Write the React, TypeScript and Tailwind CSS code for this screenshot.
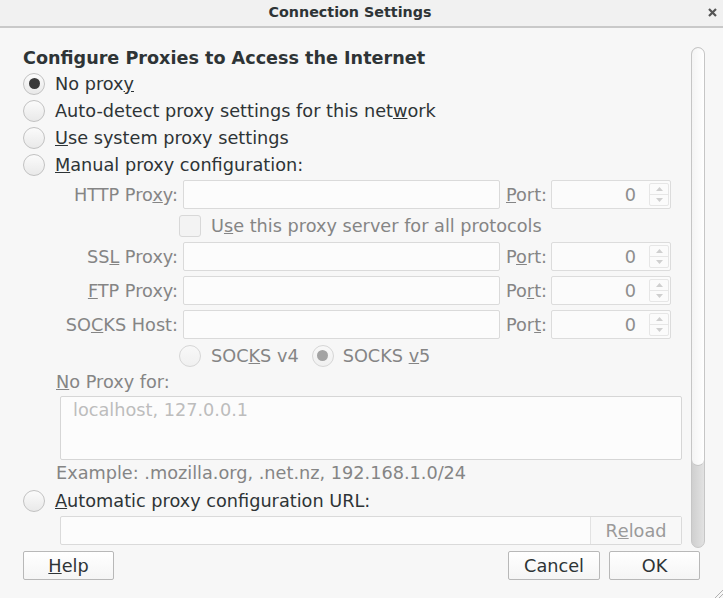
import React from 'react';

// Connection Settings dialog (GTK look)
const font = { fontFamily: '"DejaVu Sans", "Liberation Sans", sans-serif' };

function Radio({ checked, disabled }: { checked?: boolean; disabled?: boolean }) {
  return (
    <span
      className={`flex-none w-[22px] h-[22px] rounded-full border flex items-center justify-center ${
        disabled
          ? 'border-[#d6d6d6] bg-linear-to-b from-[#f8f8f8] to-[#f0f0f0]'
          : 'border-[#c2c2c2] bg-linear-to-b from-[#fbfbfb] to-[#e9e9e9]'
      }`}
    >
      {checked && (
        <span className={`w-[11px] h-[11px] rounded-full ${disabled ? 'bg-[#a3a3a3]' : 'bg-[#3a3a3a]'}`} />
      )}
    </span>
  );
}

function Input({ className = '' }: { className?: string }) {
  return <div className={`h-[29px] border border-[#dadada] bg-[#fcfcfc] rounded-[2px] ${className}`} />;
}

function Spin() {
  return (
    <div className="flex h-[29px] w-[120px] border border-[#dcdcdc] bg-[#fbfbfb] rounded-[2px]">
      <div className="flex-1 flex items-center justify-end pr-[13px] text-[#8e8e8e]">0</div>
      <div className="w-[20px] my-[2px] mr-[1px] flex flex-col border border-[#e6e6e6] rounded-[2px]">
        <div className="flex-1 flex items-center justify-center border-b border-[#e6e6e6]">
          <svg width="7" height="4" viewBox="0 0 7 4">
            <path d="M0 4 L3.5 0 L7 4 Z" fill="#cfcfcf" />
          </svg>
        </div>
        <div className="flex-1 flex items-center justify-center">
          <svg width="7" height="4" viewBox="0 0 7 4">
            <path d="M0 0 L3.5 4 L7 0 Z" fill="#cfcfcf" />
          </svg>
        </div>
      </div>
    </div>
  );
}

function ProxyRow({ label, port }: { label: React.ReactNode; port: React.ReactNode }) {
  return (
    <div className="flex items-center h-[29px]">
      <div className="w-[155px] text-right text-[#858585]">{label}</div>
      <Input className="ml-[5px] w-[317px]" />
      <div className="w-[51px] pl-[6px] text-[#858585]">{port}</div>
      <Spin />
    </div>
  );
}

function RadioRow({ checked, children }: { checked?: boolean; children: React.ReactNode }) {
  return (
    <div className="flex items-center h-[27px]">
      <Radio checked={checked} />
      <span className="ml-[10px] text-[#2e3436]">{children}</span>
    </div>
  );
}

function Button({ children, className = '' }: { children: React.ReactNode; className?: string }) {
  return (
    <div
      className={`h-[29px] border border-[#b8b8b8] rounded-[2px] bg-linear-to-b from-[#ffffff] to-[#f5f5f5] flex items-center justify-center text-[#2e3436] ${className}`}
    >
      {children}
    </div>
  );
}

export default function App() {
  return (
    <div className="relative w-[723px] h-[598px] bg-[#f7f7f7] flex flex-col overflow-hidden text-[17.7px] leading-[20px]" style={font}>
      {/* Title bar */}
      <div className="h-[28px] flex-none bg-[#f1f1f1] border-b-2 border-[#c9c9c9] flex items-center relative pr-[23px]">
        <div className="flex-1 text-center font-bold text-[14.3px] text-[#2e3436] -mt-[3px]">Connection Settings</div>
        <svg className="absolute right-[6px] top-[8px]" width="9" height="9" viewBox="0 0 9 9">
          <path d="M1 1 L8 8 M8 1 L1 8" stroke="#555" strokeWidth="2.2" />
        </svg>
      </div>

      {/* Scrolled content */}
      <div className="h-[520px] flex-none flex overflow-hidden">
        <div className="flex-1 pl-[23px] pr-[9px] pt-[19px]">
          <div className="h-[22px] leading-[22px] font-bold text-[#2e3436] text-[17.6px]">
            Configure Proxies to Access the Internet
          </div>
          <div className="mt-[1px]">
            <RadioRow checked>
              No prox<u>y</u>
            </RadioRow>
            <RadioRow>
              Auto-detect proxy settings for this net<u>w</u>ork
            </RadioRow>
            <RadioRow>
              <u>U</u>se system proxy settings
            </RadioRow>
            <RadioRow>
              <u>M</u>anual proxy configuration:
            </RadioRow>
          </div>

          <div className="mt-[2px] flex flex-col">
            <ProxyRow
              label={<>HTTP Pro<u>x</u>y:</>}
              port={<><u>P</u>ort:</>}
            />
            <div className="h-[33px] flex items-center pl-[156px]">
              <span className="w-[22px] h-[22px] rounded-[3px] border border-[#d8d8d8] bg-[#f3f3f3]" />
              <span className="ml-[10px] text-[#858585]">
                U<u>s</u>e this proxy server for all protocols
              </span>
            </div>
            <div className="flex flex-col gap-[5px]">
              <ProxyRow label={<>SS<u>L</u> Proxy:</>} port={<>P<u>o</u>rt:</>} />
              <ProxyRow label={<><u>F</u>TP Proxy:</>} port={<>Po<u>r</u>t:</>} />
              <ProxyRow label={<>SO<u>C</u>KS Host:</>} port={<>Por<u>t</u>:</>} />
            </div>
            <div className="h-[33px] flex items-center pl-[156px] text-[#858585]">
              <Radio disabled />
              <span className="ml-[10px]">
                SOC<u>K</u>S v4
              </span>
              <span className="ml-[13px] flex items-center">
                <Radio checked disabled />
                <span className="ml-[9px]">
                  SOCKS <u>v</u>5
                </span>
              </span>
            </div>
            <div className="h-[20px] pl-[33px] text-[#858585]">
              <u>N</u>o Proxy for:
            </div>
            <div className="mt-[4px] ml-[37px] h-[64px] border border-[#d6d6d6] bg-[#fcfcfc] rounded-[2px] pl-[12px] pt-[3px] text-[#bdbdbd]">
              localhost, 127.0.0.1
            </div>
            <div className="mt-[3px] h-[20px] pl-[33px] text-[#858585]">
              Example: .mozilla.org, .net.nz, 192.168.1.0/24
            </div>
            <div className="mt-[4px]">
              <RadioRow>
                <u>A</u>utomatic proxy configuration URL:
              </RadioRow>
            </div>
            <div className="mt-[2px] ml-[37px] h-[29px] flex border border-[#dadada] bg-[#fcfcfc] rounded-[2px]">
              <div className="flex-1" />
              <div className="w-[91px] border-l border-[#e2e2e2] bg-[#f8f8f8] flex items-center justify-center text-[#9a9a9a]">
                R<u>e</u>load
              </div>
            </div>
          </div>
        </div>

        {/* Scrollbar */}
        <div className="w-[14px] mr-[18px] pt-[19px] flex-none flex flex-col">
          <div className="h-[501px] rounded-full border border-[#c6c6c6] bg-linear-to-r from-[#cfcfcf] to-[#e2e2e2] overflow-hidden">
            <div className="h-[418px] rounded-full border-b border-[#c6c6c6] bg-linear-to-r from-[#f4f4f4] to-[#ffffff]" />
          </div>
        </div>
      </div>

      {/* Buttons */}
      <div className="flex-1 flex items-start pt-[3px] pl-[23px] pr-[23px]">
        <Button className="w-[91px]">
          <u>H</u>elp
        </Button>
        <div className="flex-1" />
        <Button className="w-[92px]">Cancel</Button>
        <Button className="w-[91px] ml-[9px]">OK</Button>
      </div>

      {/* Resize grip */}
      <svg className="absolute right-0 bottom-0" width="10" height="10" viewBox="0 0 10 10">
        <path d="M10 2 L2 10 M10 6 L6 10" stroke="#b0b0b0" strokeWidth="1" />
      </svg>
    </div>
  );
}
